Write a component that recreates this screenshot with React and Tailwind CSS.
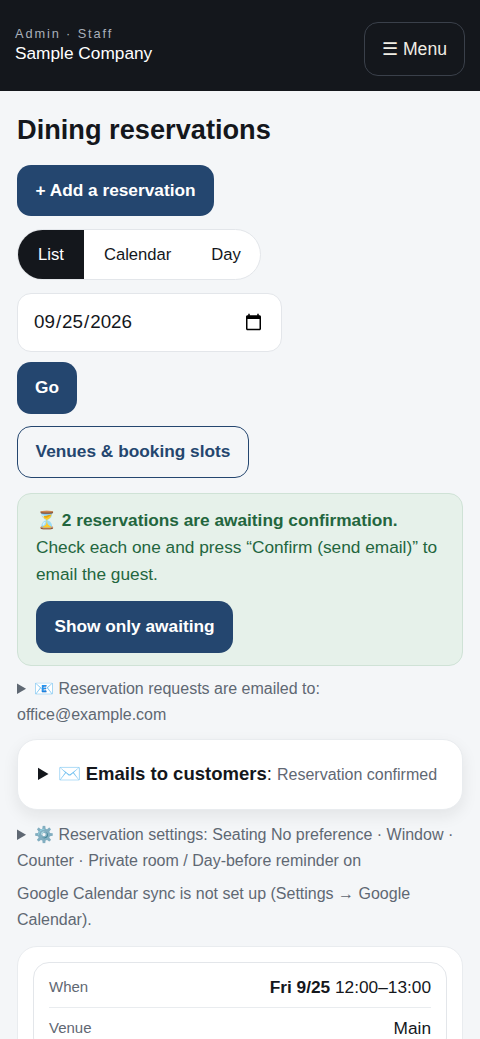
import { useState } from 'react';

function Row({ label, children, last }) {
  return (
    <div className={`flex items-center justify-between ${last ? 'pt-[8px] pb-[10px]' : 'border-b border-[#e9ecef] pt-[10px] pb-[6px]'}`}>
      <span className="text-[15px] text-[#5f6873]">{label}</span>
      <span className="text-[17.28px] text-[#14171c]">{children}</span>
    </div>
  );
}

export default function App() {
  const [date, setDate] = useState('2026-09-25');
  const [tab, setTab] = useState('List');

  return (
    <div className="h-screen overflow-hidden bg-[#f4f6f8] font-['Liberation_Sans',sans-serif] text-[#14171c]">
      <header className="flex h-[91px] items-start justify-between bg-[#14171c] px-[15px]">
        <div className="pt-[26px]">
          <div className="text-[12.8px] leading-[16px] tracking-[0.147em] text-[#a9b0ba]">Admin · Staff</div>
          <div className="text-[17.28px] leading-[22px] text-white">Sample Company</div>
        </div>
        <button className="mt-[22px] h-[54px] w-[101px] rounded-[14px] border border-[#3a404a] pt-[1px] text-[17.6px] text-[#f0ede4]">☰ Menu</button>
      </header>

      <main className="px-[17px]">
        <h1 className="mt-[20px] text-[27.2px] font-bold leading-[38px]">Dining reservations</h1>

        <button className="mt-[16px] block h-[51px] w-[197px] rounded-[14px] bg-[#24466f] text-[17.28px] font-bold text-white">+ Add a reservation</button>

        <div className="mt-[13px] flex h-[51px] w-[244px] overflow-hidden rounded-full border border-[#e3e6ea] bg-white text-[16.64px]">
          {['List', 'Calendar', 'Day'].map((t) => (
            <button
              key={t}
              onClick={() => setTab(t)}
              className={`px-[20px] pt-[1px] ${tab === t ? 'bg-[#14171c] text-white' : 'text-[#14171c]'}`}
            >
              {t}
            </button>
          ))}
        </div>

        <input
          type="date"
          value={date}
          onChange={(e) => setDate(e.target.value)}
          className="mt-[13px] block h-[59px] w-[265px] rounded-[14px] border border-[#e3e6ea] bg-white pl-[15px] pr-[16px] text-[18.8px] text-[#14171c]"
        />

        <button className="mt-[10px] block h-[52px] w-[60px] rounded-[14px] bg-[#24466f] text-[17.28px] font-bold text-white">Go</button>

        <button className="mt-[12px] block h-[52px] w-[232px] rounded-[14px] border-[1.5px] border-[#24466f] text-[17.28px] font-bold text-[#24466f]">Venues &amp; booking slots</button>

        <div className="mt-[15px] w-[446px] rounded-[14px] border border-[#cfe2d6] bg-[#e6f1ea] px-[18px] pb-[12px] pt-[13px] text-[17.28px] leading-[27.2px] text-[#23663e]">
          <strong className="font-bold">⏳ 2 reservations are awaiting confirmation.</strong>
          <br />
          Check each one and press “Confirm (send email)” to email the guest.
          <button className="mt-[12px] block h-[52px] w-[197px] rounded-[14px] bg-[#24466f] text-[17.28px] font-bold text-white">Show only awaiting</button>
        </div>

        <details className="mt-[10px] text-[16px] leading-[26px] text-[#5f6873]">
          <summary>📧 Reservation requests are emailed to: office@example.com</summary>
        </details>

        <details className="mt-[11px] w-[446px] rounded-[20px] border border-[#e9ecef] bg-white px-[20px] py-[20px] shadow-[0_6px_16px_rgba(20,23,28,0.08)]">
          <summary className="whitespace-nowrap text-[18.5px] leading-[28px]">
            {' '}✉️ <strong className="font-bold">Emails to customers</strong>: <span className="text-[16px] text-[#5f6873]">Reservation confirmed</span>
          </summary>
        </details>

        <details className="mt-[12px] text-[16px] leading-[26px] text-[#5f6873]">
          <summary>⚙️ Reservation settings: Seating No preference · Window · Counter · Private room / Day-before reminder on</summary>
        </details>

        <p className="mt-[7px] text-[16px] leading-[26px] text-[#5f6873]">Google Calendar sync is not set up (Settings → Google Calendar).</p>

        <div className="mt-[13px] w-[446px] rounded-[20px] border border-[#e9ecef] bg-white p-[15px]">
          <div className="rounded-[16px] border border-[#e3e6ea] px-[15px] py-[2px]">
            <Row label="When"><strong className="font-bold">Fri 9/25</strong> 12:00–13:00</Row>
            <Row label="Venue" last>Main</Row>
          </div>
        </div>
      </main>
    </div>
  );
}
